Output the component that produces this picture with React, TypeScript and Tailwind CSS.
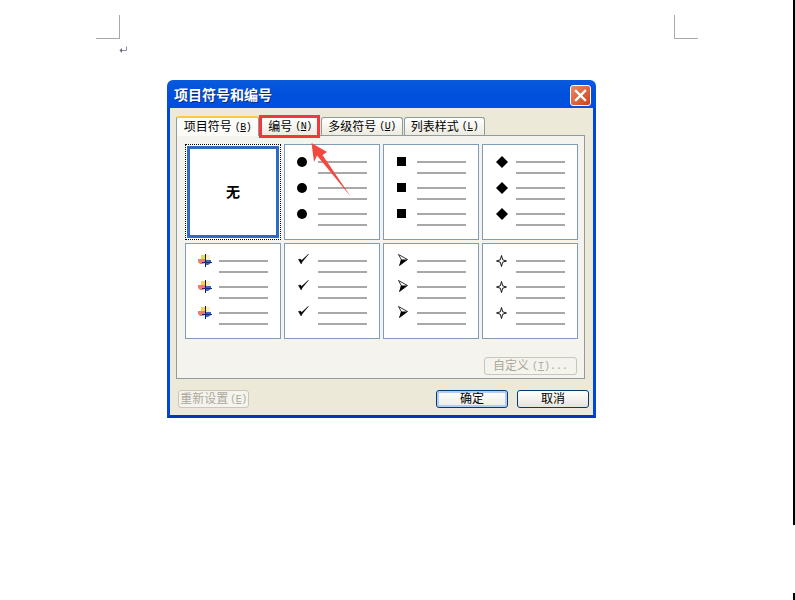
const FONT = "[font-family:'Liberation_Sans','Noto_Sans_CJK_SC',sans-serif]";

function Circle() {
  return <svg width="10" height="10" viewBox="0 0 10 10" className="shrink-0 -mt-[1px]"><circle cx="5" cy="5" r="5" fill="#000" /></svg>;
}
function Square() {
  return <div className="w-[9px] h-[9px] bg-black shrink-0 -mt-[1px]" />;
}
function Diamond() {
  return <svg width="12" height="12" viewBox="0 0 12 12" className="shrink-0 ml-[3px]"><path d="M6 0 12 6 6 12 0 6Z" fill="#000" /></svg>;
}
function Pic() {
  return (
    <svg width="14" height="13" viewBox="0 0 14 13" className="shrink-0 ml-[3px] -mt-[2px]">
      <rect x="3" y="1" width="4" height="6" fill="#f8d24a" />
      <rect x="8" y="1" width="4" height="6" fill="#f7efc0" />
      <path d="M0 5h7v4l-2 1H2L0 8Z" fill="#ef7c70" />
      <path d="M7 6h6v3l-3 2H7Z" fill="#3f62c8" />
      <rect x="7" y="0" width="1" height="13" fill="#1a1a40" />
      <rect x="4" y="8" width="10" height="1" fill="#1a2a80" />
    </svg>
  );
}
function Check() {
  return (
    <svg width="11" height="11" viewBox="0 0 11 11" className="shrink-0 ml-[3px] -mt-[4px]">
      <path d="M0.5 5.5 2.5 5 3.5 6.5 10.5 0.2 4 8 3.2 10 Z" fill="#000" stroke="#000" strokeWidth="0.5" />
    </svg>
  );
}
function Arrow() {
  return (
    <svg width="10" height="12" viewBox="0 0 10 12" className="shrink-0 ml-[3px] -mt-[3px]">
      <path d="M0.5 0.5 9.5 5.5 1.5 11.5 3.5 6Z" fill="#fff" stroke="#000" strokeWidth="0.8" />
      <path d="M3 5.5 9.5 5.5 1.5 11.5Z" fill="#000" />
    </svg>
  );
}
function Star() {
  return (
    <svg width="11" height="12" viewBox="0 0 11 12" className="shrink-0 ml-[3px] -mt-[1px]">
      <path d="M5.5 0.5 6.7 4.8 10.5 6 6.7 7.2 5.5 11.5 4.3 7.2 0.5 6 4.3 4.8Z" fill="#fff" stroke="#000" strokeWidth="0.9" />
    </svg>
  );
}

function BulletCard({ Icon }: { Icon: () => React.ReactNode }) {
  return (
    <div className="w-[96px] h-[96px] border border-[#7f9db9] bg-white pt-[16px] flex flex-col gap-[13px]">
      {[0, 1, 2].map((i) => (
        <div key={i} className="flex">
          <div className="w-[33px] h-[2px] flex items-center justify-center pl-[1px]">
            <Icon />
          </div>
          <div className="w-[49px] flex flex-col gap-[9px]">
            <div className="h-[2px] bg-[#a8a8a8]" />
            <div className="h-[2px] bg-[#a8a8a8]" />
          </div>
        </div>
      ))}
    </div>
  );
}

function Tab({ label, hot, w, active }: { label: string; hot: string; w: string; active?: boolean }) {
  return (
    <div
      className={
        active
          ? `${w} h-[20px] -mb-[1px] z-10 border-x border-[#919b9c] border-t-[2px] border-t-[#ffc73c] rounded-t-[3px] bg-[#fbfbf8] flex items-center justify-center text-[12px] text-black whitespace-nowrap`
          : `${w} h-[18px] mt-[1px] border border-b-0 border-[#919b9c] rounded-t-[3px] bg-gradient-to-b from-white to-[#ecebe0] flex items-center justify-center text-[12px] text-black whitespace-nowrap`
      }
    >
      {label}
      <span className="ml-[3px] [font-family:'Liberation_Mono',monospace] text-[10px] tracking-[-0.5px]">
        (<span className="underline">{hot}</span>)
      </span>
    </div>
  );
}

export default function App() {
  return (
    <div className={`relative w-[795px] h-[600px] bg-white overflow-hidden pt-[80px] pl-[167px] ${FONT}`}>
      {/* page crop marks */}
      <div className="absolute left-[96px] top-[15px] w-[24px] h-[24px] border-r border-b border-[#a9a9a9]" />
      <div className="absolute left-[674px] top-[15px] w-[24px] h-[24px] border-l border-b border-[#a9a9a9]" />
      <svg className="absolute left-[119px] top-[46px]" width="9" height="9" viewBox="0 0 9 9">
        <path d="M7.5 0.5V4.5H2" fill="none" stroke="#8a8a9c" strokeWidth="1" />
        <path d="M0.5 4.5 3 2V7Z" fill="#6a6a80" />
      </svg>
      <div className="absolute left-[793px] top-0 w-[2px] h-[525px] bg-black" />
      <div className="absolute left-[793px] top-[593px] w-[2px] h-[7px] bg-black" />

      {/* dialog */}
      <div className="w-[429px] h-[338px] flex flex-col">
        <div className="h-[28px] shrink-0 rounded-t-[6px] bg-gradient-to-b from-[#0a5add] via-[#0050dc] to-[#0050e0] flex items-center justify-between pl-[7px] pr-[5px]">
          <span className="text-[14px] font-bold text-white leading-none pt-[2px] [text-shadow:1px_1px_0_#0a2a80]">项目符号和编号</span>
          <div className="w-[21px] h-[21px] mt-[3px] rounded-[3px] border border-white bg-gradient-to-br from-[#e98a62] to-[#cf3d14] flex items-center justify-center">
            <svg width="13" height="13" viewBox="0 0 13 13">
              <path d="M2 2 11 11M11 2 2 11" stroke="#fff" strokeWidth="2.4" strokeLinecap="square" />
            </svg>
          </div>
        </div>

        <div className="flex-1 flex flex-col bg-[#ece9d8] border-x-[3px] border-b-[3px] border-x-[#0046d8] border-b-[#0636b8] pt-[8px] pl-[6px] pr-[8px]">
          <div className="flex h-[19px] gap-[1px]">
            <Tab label="项目符号" hot="B" w="w-[83px]" active />
            <Tab label="编号" hot="N" w="w-[60px]" />
            <Tab label="多级符号" hot="U" w="w-[82px]" />
            <Tab label="列表样式" hot="L" w="w-[81px]" />
          </div>

          <div className="h-[244px] border border-[#919b9c] bg-[#f4f3ee] pt-[8px] pl-[8px] flex flex-col">
            <div className="grid grid-cols-[96px_96px_96px_96px] gap-x-[3px] gap-y-[3px]">
              <div className="w-[96px] h-[96px] bg-white border border-dotted border-black p-[1px]">
                <div className="w-full h-full border-[3px] border-[#316ac5] flex items-center justify-center text-[14px] font-bold text-black">无</div>
              </div>
              <BulletCard Icon={Circle} />
              <BulletCard Icon={Square} />
              <BulletCard Icon={Diamond} />
              <BulletCard Icon={Pic} />
              <BulletCard Icon={Check} />
              <BulletCard Icon={Arrow} />
              <BulletCard Icon={Star} />
            </div>
            <div className="flex justify-end pr-[7px] mt-[18px]">
              <div className="w-[93px] h-[18px] border border-[#c9c7ba] rounded-[3px] bg-[#f4f3ee] flex items-center justify-center text-[12px] text-[#aca899]">
                自定义<span className="ml-[3px] [font-family:'Liberation_Mono',monospace] text-[10px]">(<span className="underline">T</span>)...</span>
              </div>
            </div>
          </div>

          <div className="flex items-start mt-[11px] pl-[2px]">
            <div className="w-[71px] h-[18px] border border-[#c9c7ba] rounded-[3px] bg-[#f4f3ee] flex items-center justify-center text-[12px] text-[#aca899] whitespace-nowrap">
              重新设置<span className="ml-[2px] [font-family:'Liberation_Mono',monospace] text-[10px] tracking-[-0.5px]">(<span className="underline">E</span>)</span>
            </div>
            <div className="ml-auto flex gap-[9px]">
              <div className="w-[72px] h-[18px] border border-[#003c74] rounded-[3px] bg-gradient-to-b from-white to-[#ecebe5] shadow-[inset_0_0_0_2px_#b5cdf0] flex items-center justify-center text-[12px] text-black">确定</div>
              <div className="w-[72px] h-[18px] border border-[#003c74] rounded-[3px] bg-gradient-to-b from-white to-[#e6e4da] flex items-center justify-center text-[12px] text-black -mr-[4px]">取消</div>
            </div>
          </div>
        </div>
      </div>

      {/* red annotation */}
      <div className="absolute left-[259px] top-[115px] w-[61px] h-[23px] border-[3px] border-[#ee3a3a]" />
      <svg className="absolute left-[305px] top-[138px]" width="52" height="64" viewBox="0 0 52 64">
        <path d="M6.5 5 22 14 17.5 17 46 59 12 17.5 9 24Z" fill="#f4473f" />
      </svg>
    </div>
  );
}
